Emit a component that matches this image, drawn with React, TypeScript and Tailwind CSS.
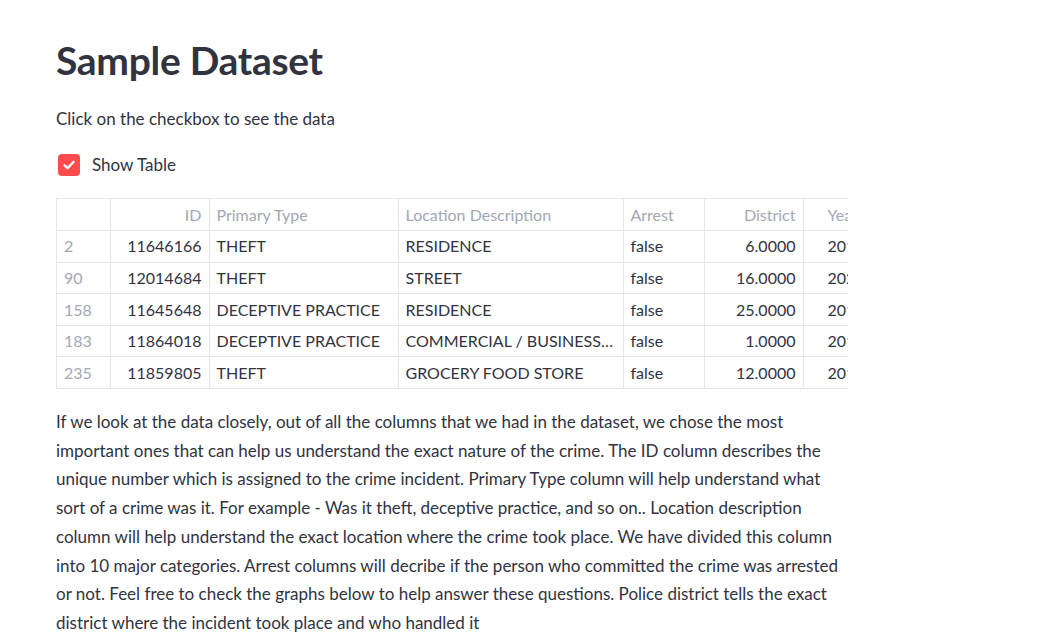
import React from "react";

type Row = {
  idx: string;
  id: string;
  type: string;
  loc: string;
  arrest: string;
  district: string;
  year: string;
};

const rows: Row[] = [
  { idx: "2", id: "11646166", type: "THEFT", loc: "RESIDENCE", arrest: "false", district: "6.0000", year: "2019" },
  { idx: "90", id: "12014684", type: "THEFT", loc: "STREET", arrest: "false", district: "16.0000", year: "2020" },
  { idx: "158", id: "11645648", type: "DECEPTIVE PRACTICE", loc: "RESIDENCE", arrest: "false", district: "25.0000", year: "2019" },
  { idx: "183", id: "11864018", type: "DECEPTIVE PRACTICE", loc: "COMMERCIAL / BUSINESS…", arrest: "false", district: "1.0000", year: "2019" },
  { idx: "235", id: "11859805", type: "THEFT", loc: "GROCERY FOOD STORE", arrest: "false", district: "12.0000", year: "2019" },
];

const lines = [
  "If we look at the data closely, out of all the columns that we had in the dataset, we chose the most",
  "important ones that can help us understand the exact nature of the crime. The ID column describes the",
  "unique number which is assigned to the crime incident. Primary Type column will help understand what",
  "sort of a crime was it. For example - Was it theft, deceptive practice, and so on.. Location description",
  "column will help understand the exact location where the crime took place. We have divided this column",
  "into 10 major categories. Arrest columns will decribe if the person who committed the crime was arrested",
  "or not. Feel free to check the graphs below to help answer these questions. Police district tells the exact",
  "district where the incident took place and who handled it",
];

const cell = "h-[31.6px] border-r border-b border-[#e6e6ea] px-[7px] whitespace-nowrap overflow-hidden";

export default function App() {
  return (
    <div className="min-h-[642px] w-[1056px] bg-white font-['Lato',sans-serif] text-[#31333f]">
      <div className="pl-[56px] pt-[37px]">
        <h1 className="text-[39px] font-bold leading-[46px] tracking-[-0.3px] text-[#31333f]">
          Sample Dataset
        </h1>

        <p className="mt-[24px] text-[17px] leading-[24px]">Click on the checkbox to see the data</p>

        <label className="mt-[23px] flex items-center gap-[12px]">
          <span className="ml-[2px] flex h-[22px] w-[22px] items-center justify-center rounded-[4px] bg-[#ff4b4b]">
            <svg width="14" height="14" viewBox="0 0 14 14" fill="none">
              <path d="M2.5 7.3 L5.6 10.2 L11.6 3.8" stroke="white" strokeWidth="2.4" strokeLinecap="round" strokeLinejoin="round" />
            </svg>
          </span>
          <span className="text-[17px] leading-[22px]">Show Table</span>
        </label>

        <div className="mt-[22px] w-[792px] overflow-hidden border-l border-t border-[#e6e6ea]">
          <table className="w-[850px] table-fixed border-collapse text-[16px]">
            <colgroup>
              <col className="w-[53px]" />
              <col className="w-[99px]" />
              <col className="w-[189px]" />
              <col className="w-[225px]" />
              <col className="w-[81px]" />
              <col className="w-[99px]" />
              <col className="w-[104px]" />
            </colgroup>
            <thead>
              <tr className="text-[#a3a8b4]">
                <th className={cell + " font-normal"}></th>
                <th className={cell + " text-right font-normal"}>ID</th>
                <th className={cell + " text-left font-normal"}>Primary Type</th>
                <th className={cell + " text-left font-normal"}>Location Description</th>
                <th className={cell + " text-left font-normal"}>Arrest</th>
                <th className={cell + " text-right font-normal"}>District</th>
                <th className={cell + " pl-[24px] text-left font-normal"}>Year</th>
              </tr>
            </thead>
            <tbody>
              {rows.map((r) => (
                <tr key={r.idx}>
                  <td className={cell + " text-[#a3a8b4]"}>{r.idx}</td>
                  <td className={cell + " text-right"}>{r.id}</td>
                  <td className={cell}>{r.type}</td>
                  <td className={cell}>{r.loc}</td>
                  <td className={cell}>{r.arrest}</td>
                  <td className={cell + " text-right"}>{r.district}</td>
                  <td className={cell + " pl-[24px]"}>{r.year}</td>
                </tr>
              ))}
            </tbody>
          </table>
        </div>

        <div className="mt-[19px] text-[17px] leading-[28.7px]">
          {lines.map((l, i) => (
            <div key={i} className="whitespace-nowrap">
              {l}
            </div>
          ))}
        </div>
      </div>
    </div>
  );
}
